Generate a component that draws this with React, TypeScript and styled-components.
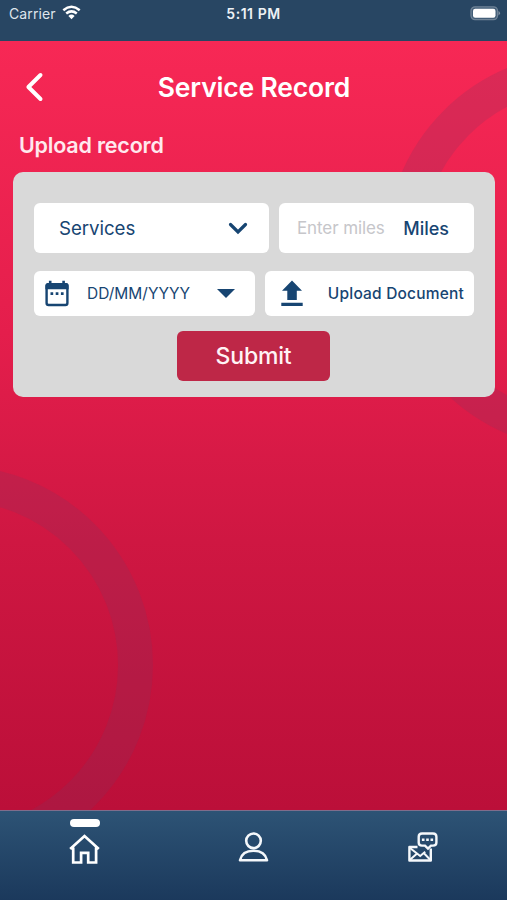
import React from "react";
import styled, { createGlobalStyle } from "styled-components";

const navy = "#174572";

const GlobalStyle = createGlobalStyle`
  * { box-sizing: border-box; }
  body { margin: 0; }
  button, input { font: inherit; color: inherit; border: 0; padding: 0; margin: 0; }
  svg { display: block; flex: none; }
`;

const Screen = styled.div`
  position: relative;
  display: flex;
  flex-direction: column;
  width: 507px;
  height: 900px;
  overflow: hidden;
  font-family: Inter, "Liberation Sans", sans-serif;
  color: #fff;
`;

const StatusBar = styled.header`
  display: grid;
  grid-template-columns: 1fr auto 1fr;
  align-items: start;
  height: 41px;
  padding: 5px 6px 0 9px;
  background: #284663;
  font-size: 14px;
  line-height: 18px;
`;

const Carrier = styled.div`
  display: flex;
  gap: 6px;
  color: #dfe5ec;
  letter-spacing: 0.12px;
`;

const Clock = styled.div`
  margin-right: 3px;
  font-size: 14px;
  font-weight: 600;
  color: #edf1f5;
  letter-spacing: 0.55px;
`;

const BatterySlot = styled.div`
  display: flex;
  justify-content: flex-end;
  padding-top: 1px;
`;

const Main = styled.main`
  position: relative;
  display: flex;
  flex-direction: column;
  height: 769px;
  padding: 0 12px 0 13px;
  background: linear-gradient(#f72855 0%, #e41e4c 38%, #cf1742 65%, #bb0f39 100%);
`;

const Rings = styled.svg`
  position: absolute;
  inset: 0;
`;

const TitleRow = styled.div`
  position: relative;
  display: grid;
  grid-template-columns: 40px 1fr 40px;
  align-items: center;
  height: 91px;
`;

const BackButton = styled.button`
  display: flex;
  padding-left: 11px;
  background: none;
`;

const Title = styled.h1`
  margin: 0;
  text-align: center;
  font-size: 26.5px;
  line-height: 34px;
  font-weight: 600;
  letter-spacing: -0.17px;
`;

const SectionTitle = styled.h2`
  position: relative;
  margin: 0 0 13px 6px;
  font-size: 21.5px;
  line-height: 27px;
  font-weight: 600;
  letter-spacing: -0.2px;
  color: #ffe9ee;
`;

const Card = styled.section`
  position: relative;
  display: flex;
  flex-direction: column;
  height: 225px;
  padding: 31px 21px 0;
  border-radius: 10px;
  background: #d9d9d9;
`;

const FieldRow = styled.div<{ $height: number; $columns: string; $gap: number }>`
  display: grid;
  grid-template-columns: ${(p) => p.$columns};
  gap: ${(p) => p.$gap}px;
  height: ${(p) => p.$height}px;
  & + & { margin-top: 18px; }
`;

const Field = styled.div<{ $left: number; $right: number }>`
  display: flex;
  align-items: center;
  justify-content: space-between;
  min-width: 0;
  padding: 0 ${(p) => p.$right}px 0 ${(p) => p.$left}px;
  border-radius: 6px;
  background: #fff;
  color: ${navy};
`;

const Label = styled.span<{ $size: number; $weight?: number; $spacing?: number }>`
  font-size: ${(p) => p.$size}px;
  font-weight: ${(p) => p.$weight ?? 400};
  letter-spacing: ${(p) => p.$spacing ?? 0}px;
  white-space: nowrap;
`;

const MilesInput = styled.input`
  width: 96px;
  outline: none;
  background: none;
  font-size: 17px;
  letter-spacing: -0.1px;
  &::placeholder { color: #c6c6ca; opacity: 1; }
`;

const DateGroup = styled.div`
  display: flex;
  align-items: center;
  gap: 18px;
`;

const SubmitButton = styled.button`
  align-self: center;
  width: 153px;
  height: 50px;
  margin: 15px 1px 0 0;
  border-radius: 6px;
  background: #be2747;
  color: #fff3f5;
  font-size: 23px;
  font-weight: 500;
  letter-spacing: -0.2px;
`;

const TabBar = styled.nav`
  display: grid;
  grid-template-columns: repeat(3, 1fr);
  height: 90px;
  border-top: 1px solid #7f6d8c;
  background: linear-gradient(#2d5375, #1b395c);
`;

const Tab = styled.a<{ $active?: boolean }>`
  display: flex;
  flex-direction: column;
  align-items: center;
  gap: ${(p) => (p.$active ? 7 : 5)}px;
  padding-top: 8px;
  &::before {
    content: "";
    width: 30px;
    height: 8px;
    border-radius: 4px;
    background: ${(p) => (p.$active ? "#fff" : "transparent")};
  }
`;

const WifiIcon = () => (
  <svg width="19" height="15" viewBox="0 0 19 15" fill="none" stroke="#fff" strokeWidth="2.5">
    <path d="M1.3 5.2Q9.5-1.6 17.7 5.2M4.2 8.5Q9.5 4.2 14.8 8.5" />
    <path d="M6.4 10.9Q9.5 8.3 12.6 10.9L9.5 14.3Z" fill="#fff" stroke="none" />
  </svg>
);

const BatteryIcon = () => (
  <svg width="31" height="15" viewBox="0 0 31 15">
    <rect x="1" y=".8" width="26.5" height="12.8" rx="4" fill="#435e78" stroke="#6f8397" strokeWidth="1.3" />
    <rect x="3" y="2.8" width="22.5" height="9" rx="2.2" fill="#fff" />
    <path d="M28.5 5Q31.6 7.2 28.5 9.4Z" fill="#8192a3" />
  </svg>
);

const BackIcon = () => (
  <svg width="20" height="30" viewBox="0 0 20 30" fill="none" stroke="#fff" strokeWidth="4">
    <path d="M16.5 3L4.4 15L16.5 27" strokeLinejoin="round" strokeLinecap="round" />
  </svg>
);

const ChevronIcon = () => (
  <svg width="20" height="13" viewBox="0 0 20 13" fill="none" stroke={navy} strokeWidth="3.2">
    <path d="M2.5 2.5L10 10L17.5 2.5" strokeLinecap="round" />
  </svg>
);

const CalendarIcon = () => (
  <svg width="24" height="27" viewBox="0 0 24 27">
    <path d="M5.2 .8V5M18.6 .8V5" stroke={navy} strokeWidth="2.6" />
    <rect x="1.6" y="4.2" width="20.8" height="20.8" rx="2" fill="none" stroke={navy} strokeWidth="2.4" />
    <path d="M.4 5.5Q.4 3 3 3H21Q23.6 3 23.6 5.5V9.2H.4Z" fill={navy} />
    <path d="M5.5 12.3H8.2V14.9H5.5ZM10.7 12.3H13.4V14.9H10.7ZM15.9 12.3H18.6V14.9H15.9Z" fill={navy} />
  </svg>
);

const CaretIcon = () => (
  <svg width="18" height="9" viewBox="0 0 18 9" fill={navy}>
    <path d="M0 0H18L9 9Z" />
  </svg>
);

const UploadIcon = () => (
  <svg width="22" height="27" viewBox="0 0 22 27" fill={navy}>
    <path d="M11 .6L21 10.8H15.8V20H6.3V10.8H1ZM.3 22.8H21.7V26H.3Z" />
  </svg>
);

const HomeIcon = () => (
  <svg width="31" height="31" viewBox="0 0 31 31" fill="none" stroke="#fff" strokeWidth="2.7">
    <path d="M1.2 15L15.5 2L29.8 15M4.2 13.4V28.5H12.1V18.9H19.2V28.5H27.1V13.4" />
  </svg>
);

const UserIcon = () => (
  <svg width="31" height="31" viewBox="0 0 31 31" fill="none" stroke="#f5f8fb" strokeWidth="2.6">
    <circle cx="15.5" cy="8.8" r="7.3" />
    <path d="M2 28.2C3.5 21.8 8.6 18.8 15.5 18.8S27.5 21.8 29 28.2Z" strokeLinejoin="round" />
  </svg>
);

const MessageIcon = () => (
  <svg width="31" height="31" viewBox="0 0 31 31" fill="none" stroke="#f5f8fb" strokeWidth="2.4">
    <path d="M10.5 15H2.4V28.5H23.8V16.5" strokeLinejoin="round" />
    <path d="M3 16L13.2 24L18.2 19.8M3 27.8L9.8 21.7M23.2 27.8L17 21.2" strokeWidth="2" />
    <path d="M15 1.5H26Q29.4 1.5 29.4 4.8V10.4Q29.4 13.6 26 13.6H24L21 16.6L18 13.6H15Q11.7 13.6 11.7 10.4V4.8Q11.7 1.5 15 1.5Z" />
    <path d="M14.9 6.4H17.5V9H14.9ZM19.2 6.4H21.8V9H19.2ZM23.5 6.4H26.1V9H23.5Z" fill="#f5f8fb" stroke="none" />
  </svg>
);

export default function App() {
  return (
    <Screen>
      <GlobalStyle />
      <StatusBar>
        <Carrier>Carrier <WifiIcon /></Carrier>
        <Clock>5:11 PM</Clock>
        <BatterySlot><BatteryIcon /></BatterySlot>
      </StatusBar>
      <Main>
        <Rings width="507" height="769" viewBox="0 0 507 769" fill="none" stroke="#80385f" strokeOpacity=".22" strokeWidth="35">
          <circle cx="584" cy="210" r="181" />
          <circle cx="-46.5" cy="624" r="182" />
        </Rings>
        <TitleRow>
          <BackButton aria-label="Back"><BackIcon /></BackButton>
          <Title>Service Record</Title>
        </TitleRow>
        <SectionTitle>Upload record</SectionTitle>
        <Card>
          <FieldRow $height={50} $columns="235px 1fr" $gap={10}>
            <Field $left={25} $right={21}>
              <Label $size={18.7} $spacing={-0.05}>Services</Label>
              <ChevronIcon />
            </Field>
            <Field $left={18} $right={25}>
              <MilesInput placeholder="Enter miles" />
              <Label $size={18} $weight={500}>Miles</Label>
            </Field>
          </FieldRow>
          <FieldRow $height={45} $columns="221px 1fr" $gap={10}>
            <Field $left={11} $right={20}>
              <DateGroup>
                <CalendarIcon />
                <Label $size={15.5}>DD/MM/YYYY</Label>
              </DateGroup>
              <CaretIcon />
            </Field>
            <Field $left={16} $right={10}>
              <UploadIcon />
              <Label $size={15.5} $weight={500} $spacing={0.19}>Upload Document</Label>
            </Field>
          </FieldRow>
          <SubmitButton>Submit</SubmitButton>
        </Card>
      </Main>
      <TabBar>
        <Tab $active aria-label="Home"><HomeIcon /></Tab>
        <Tab aria-label="Profile"><UserIcon /></Tab>
        <Tab aria-label="Messages"><MessageIcon /></Tab>
      </TabBar>
    </Screen>
  );
}
